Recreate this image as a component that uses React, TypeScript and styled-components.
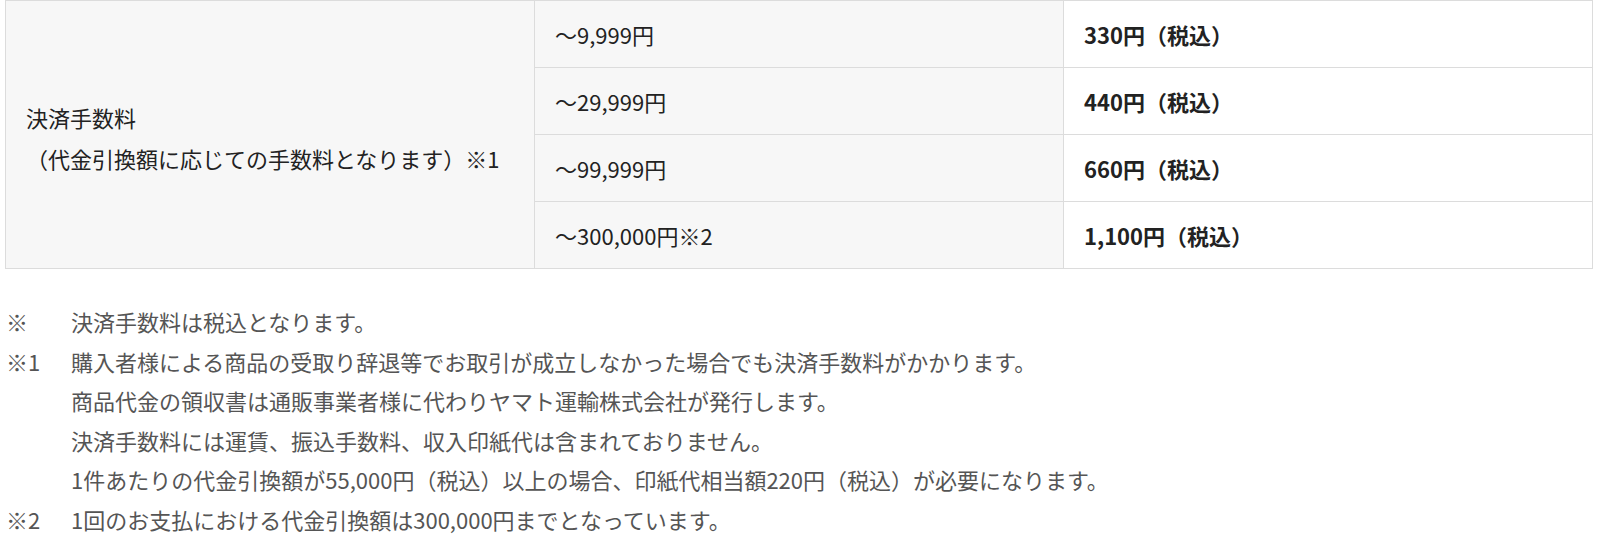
import React from 'react';
import styled, { createGlobalStyle } from 'styled-components';

const GlobalStyle = createGlobalStyle`
  html, body {
    margin: 0;
    padding: 0;
    background: #fff;
  }
  body {
    font-family: "Noto Sans CJK JP", "Noto Sans", sans-serif;
    color: #222;
  }
`;

const Page = styled.div`
  padding: 0 7px 0 5px;
`;

const FeeTable = styled.table`
  width: 100%;
  border-collapse: collapse;
  table-layout: fixed;
  font-size: 22px;
  border: 1px solid #dcdcdc;
`;

const Cell = styled.td<{ $bold?: boolean; $white?: boolean; $drop?: boolean }>`
  height: 66px;
  padding: ${(p) => (p.$drop ? '6px' : '0')} 20px 0;
  border: 1px solid #dcdcdc;
  background: ${(p) => (p.$white ? '#fff' : '#f7f7f7')};
  font-weight: ${(p) => (p.$bold ? 700 : 400)};
  line-height: 41px;
  vertical-align: middle;
  color: #222;
`;

const Notes = styled.dl`
  margin: 33px 0 0;
  display: grid;
  grid-template-columns: 66px 1fr;
  font-size: 22px;
  line-height: 39.5px;
  color: #555;
`;

const NoteMark = styled.dt`
  margin: 0;
  padding-left: 1px;
`;

const NoteBody = styled.dd`
  margin: 0;
`;

const NoteLine = styled.div``;

const rows = [
  { range: '～9,999円', fee: '330円（税込）' },
  { range: '～29,999円', fee: '440円（税込）' },
  { range: '～99,999円', fee: '660円（税込）' },
  { range: '～300,000円※2', fee: '1,100円（税込）' },
];

const notes: { mark: string; lines: string[] }[] = [
  { mark: '※', lines: ['決済手数料は税込となります。'] },
  {
    mark: '※1',
    lines: [
      '購入者様による商品の受取り辞退等でお取引が成立しなかった場合でも決済手数料がかかります。',
      '商品代金の領収書は通販事業者様に代わりヤマト運輸株式会社が発行します。',
      '決済手数料には運賃、振込手数料、収入印紙代は含まれておりません。',
      '1件あたりの代金引換額が55,000円（税込）以上の場合、印紙代相当額220円（税込）が必要になります。',
    ],
  },
  { mark: '※2', lines: ['1回のお支払における代金引換額は300,000円までとなっています。'] },
];

export default function App() {
  return (
    <Page>
      <GlobalStyle />
      <FeeTable>
        <tbody>
          {rows.map((r, i) => (
            <tr key={i}>
              {i === 0 && (
                <Cell rowSpan={rows.length} $drop>
                  決済手数料
                  <br />
                  （代金引換額に応じての手数料となります）※1
                </Cell>
              )}
              <Cell>{r.range}</Cell>
              <Cell $white $bold>
                {r.fee}
              </Cell>
            </tr>
          ))}
        </tbody>
      </FeeTable>
      <Notes>
        {notes.map((n) => (
          <React.Fragment key={n.mark}>
            <NoteMark>{n.mark}</NoteMark>
            <NoteBody>
              {n.lines.map((l, i) => (
                <NoteLine key={i}>{l}</NoteLine>
              ))}
            </NoteBody>
          </React.Fragment>
        ))}
      </Notes>
    </Page>
  );
}
